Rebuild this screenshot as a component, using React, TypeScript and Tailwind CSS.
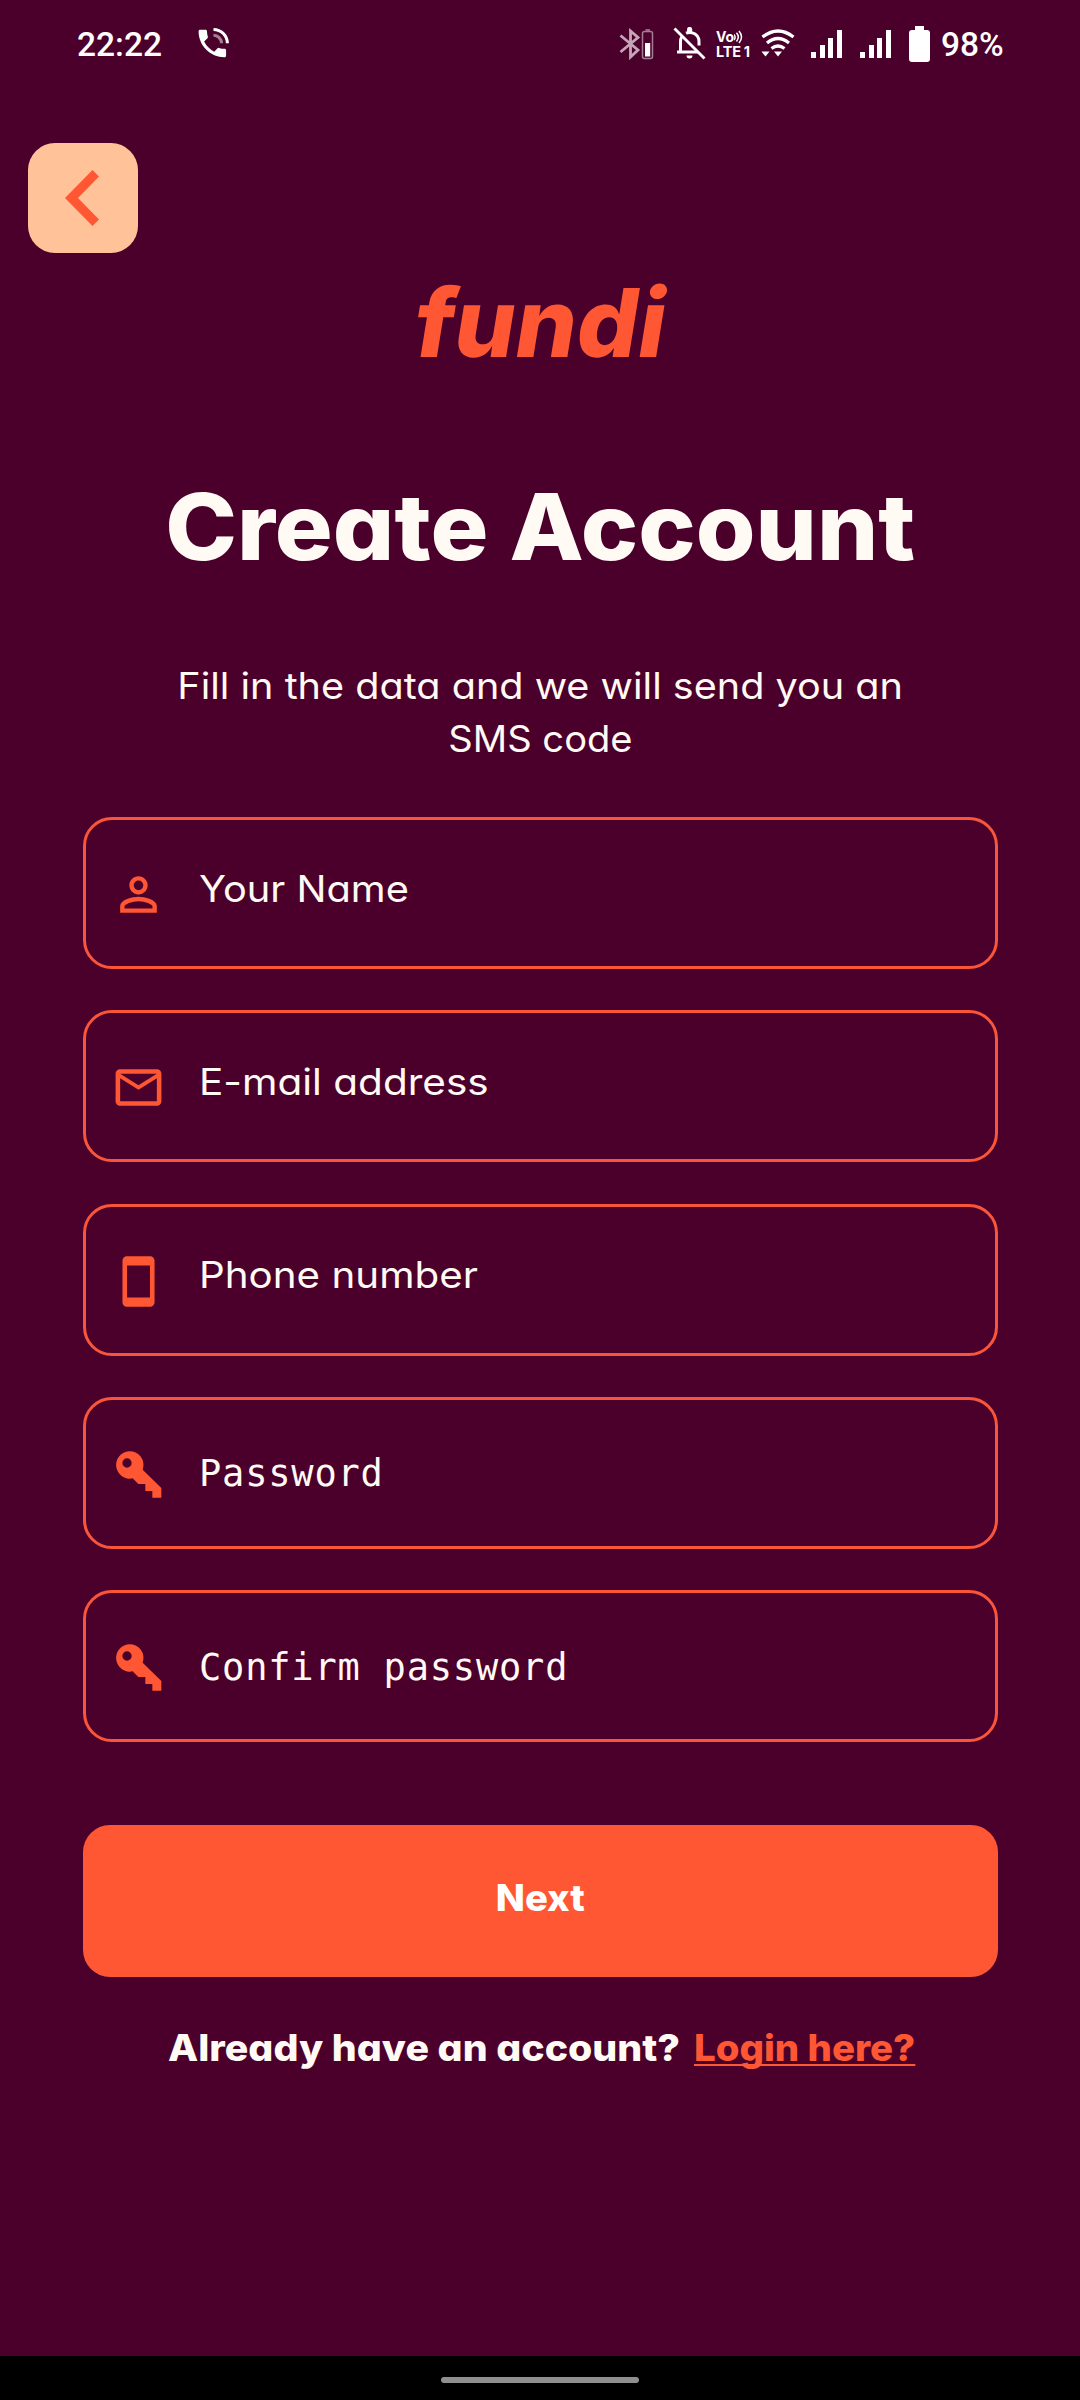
import type { ReactNode } from "react";
import { MdMailOutline, MdPersonOutline, MdStayCurrentPortrait } from "react-icons/md";

function CallIcon() {
  return (
    <svg viewBox="0 0 24 24" className="size-[39px]" fill="currentColor">
      <path d="M20 15.5c-1.25 0-2.45-.2-3.57-.57a1.02 1.02 0 0 0-1.02.24l-2.2 2.2a15.05 15.05 0 0 1-6.59-6.59l2.2-2.21c.28-.26.36-.65.25-1A11.36 11.36 0 0 1 8.5 4c0-.55-.45-1-1-1H4c-.55 0-1 .45-1 1 0 9.39 7.61 17 17 17 .55 0 1-.45 1-1v-3.5c0-.55-.45-1-1-1z" transform="translate(0 1.3) scale(.94)" />
      <path d="M21.5 12.5h-1.9a7.6 7.6 0 0 0-7.6-7.6V3a9.5 9.5 0 0 1 9.5 9.5z" />
      <path opacity=".5" d="M17.9 12.5H16a4 4 0 0 0-4-4V6.6a5.9 5.9 0 0 1 5.9 5.9z" />
    </svg>
  );
}

function BluetoothIcon() {
  return (
    <svg viewBox="0 0 36 32" className="h-8 w-9" fill="none">
      <path d="M1.5 7.5l17.5 14.500-7.500 7V3L19 9.500 1.500 24" stroke="#c3a5b7" strokeWidth="2.8" />
      <rect x="23.5" y="3.5" width="10" height="27" rx="2" stroke="#a47c93" strokeWidth="1.5" />
      <path d="M26.5 1.2h4.500v1.600h-4.500z" fill="#a47c93" />
      <path d="M26 15h5.200v13.500H26z" fill="#fff" />
    </svg>
  );
}

function MutedBellIcon() {
  return (
    <svg viewBox="0 0 33 33" className="size-[33px]" fill="none" stroke="#fff">
      <path d="M7.5 25V14.5c0-1.800.5-3.400 1.300-4.700M13 6.200c5.800-2.400 13 1.300 13 8.300v4" strokeWidth="3" />
      <path d="M4 25h21" strokeWidth="3" />
      <path d="M14 2.500a2.600 2.600 0 0 1 5.200 0V5H14z" fill="#fff" stroke="none" />
      <path d="M13.500 28.500h6a3 3 0 0 1-6 0z" fill="#fff" stroke="none" />
      <path d="M1.500 1.500l30 30" strokeWidth="2.8" />
    </svg>
  );
}

function VolteIcon() {
  return (
    <div className="flex w-[36px] flex-col font-[Inter] font-bold text-white">
      <div className="flex h-[14px] items-center">
        <span className="text-[14px] leading-[14px] tracking-[-0.2px]">Vo</span>
        <svg viewBox="0 0 9 14" className="h-[14px] w-[9px]" fill="none" stroke="#fff" strokeWidth="1.5">
          <path d="M0 4.500q2.200 2.800 0 5.600M2.500 2.800q3.600 4.200 0 8.700M5 1q5 6 0 12" />
        </svg>
      </div>
      <div className="mt-px flex gap-[3px] text-[14.5px] leading-[14px] tracking-[-0.2px]">
        <span>LTE</span>
        <span>1</span>
      </div>
    </div>
  );
}

function WifiIcon() {
  return (
    <svg viewBox="0 0 34 30" className="h-[30px] w-[34px]" fill="none" stroke="#fff" strokeWidth="3.2">
      <path d="M1.500 8q15.500-12 31 0M6 14q11-9 22 0M10.500 19.500q6.500-5 13 0" />
      <path d="M.5 22.500h8l-4 5zM13 22.500h8l-4 5z" fill="#fff" stroke="none" />
    </svg>
  );
}

function SignalIcon() {
  return (
    <div className="flex h-[28px] w-[31px] items-end justify-between">
      <div className="h-[6px] w-[5px] bg-white" />
      <div className="h-[13px] w-[5px] bg-white" />
      <div className="h-[20px] w-[5px] bg-white" />
      <div className="h-[28px] w-[5px] bg-white" />
    </div>
  );
}

function BatteryIcon() {
  return (
    <div className="flex w-[21px] flex-col items-center">
      <div className="h-[4px] w-[9px] bg-white" />
      <div className="h-[32px] w-full rounded-[3px] bg-white" />
    </div>
  );
}

function KeyIcon() {
  return (
    <svg viewBox="0 0 165 165" className="size-[55px]" fill="currentColor">
      <path
        fillRule="evenodd"
        d="M54 13a41 41 0 0 1 41 55l56 55v29h-27v-20h-21v-21H82L65 94A41 41 0 1 1 54 13zM48 34a14 14 0 1 0 0 28 14 14 0 0 0 0-28z"
      />
    </svg>
  );
}

function StatusBar() {
  return (
    <header className="flex h-[86px] items-start font-[Roboto] text-[33.5px] leading-[40px] font-medium text-white">
      <span className="mt-[25px] ml-[77px] w-[117px]">22:22</span>
      <div className="mt-[23px] w-[425px]">
        <CallIcon />
      </div>
      <div className="mt-[28px]">
        <BluetoothIcon />
      </div>
      <div className="mt-[27px] ml-[18px]">
        <MutedBellIcon />
      </div>
      <div className="mt-[30px] ml-[10px]">
        <VolteIcon />
      </div>
      <div className="mt-[29px] ml-[9px]">
        <WifiIcon />
      </div>
      <div className="mt-[29.5px] ml-[16px] flex gap-[18px]">
        <SignalIcon />
        <SignalIcon />
      </div>
      <div className="mt-[26px] ml-[18px]">
        <BatteryIcon />
      </div>
      <span className="mt-[25px] ml-[11px]">98%</span>
    </header>
  );
}

function Field({ icon, children }: { icon: ReactNode; children: ReactNode }) {
  return (
    <div className="flex h-[152px] items-start rounded-[29px] border-[3px] border-[#f9553a] pl-[25px] text-[37px] leading-[46px]">
      <div className="mt-[47px] w-[88px] text-[55px] text-[#ff5733]">{icon}</div>
      {children}
    </div>
  );
}

export default function App() {
  return (
    <div className="flex h-[2400px] w-[1080px] flex-col bg-[#4b002b] font-[Inter,sans-serif] text-[#fffaf4] [font-feature-settings:'cv11']">
      <StatusBar />
      <button className="mt-[57px] ml-[28px] flex size-[110px] items-center justify-center rounded-[27px] bg-[#ffc299] text-[#ff5733]">
        <svg viewBox="0 0 34 56" className="mr-[2px] h-[56px] w-[34px]" fill="currentColor">
          <path d="M27.5 0L34 6.500 13 28l21 21.500-6.500 6.500L0 28z" />
        </svg>
      </button>

      <div className="mt-[10px] flex h-[120px] items-center justify-center pl-[4px] text-[95px] leading-[120px] font-extrabold text-[#ff5733]">
        <span className="scale-x-[1.015] -skew-x-9">fundi</span>
      </div>
      <h1 className="mt-[84px] text-center text-[92px] leading-[120px] font-extrabold">
        <span className="inline-block scale-x-[1.05]">Create Account</span>
      </h1>
      <p className="mt-[72px] pl-px text-center text-[37px] leading-[53px]">
        <span className="inline-block scale-x-[1.07]">Fill in the data and we will send you an</span>
        <br />
        <span className="inline-block scale-x-[1.03]">SMS code</span>
      </p>

      <form className="mt-[52px] mr-[82px] ml-[83px] flex flex-col gap-[41.25px]">
        <Field icon={<MdPersonOutline />}>
          <span className="mt-[46px] origin-left scale-x-[1.075]">Your Name</span>
        </Field>
        <Field icon={<MdMailOutline />}>
          <span className="mt-[46px] origin-left scale-x-[1.095]">E-mail address</span>
        </Field>
        <Field icon={<MdStayCurrentPortrait />}>
          <span className="mt-[45px] origin-left scale-x-[1.09]">Phone number</span>
        </Field>
        <Field icon={<KeyIcon />}>
          <span className="mt-[51px] font-['DejaVu_Sans_Mono'] tracking-[0.8px]">Password</span>
        </Field>
        <Field icon={<KeyIcon />}>
          <span className="mt-[52px] font-['DejaVu_Sans_Mono'] tracking-[0.8px]">Confirm password</span>
        </Field>
      </form>

      <button className="mt-[83px] mr-[82px] ml-[83px] h-[152px] rounded-[27px] bg-[#ff5733] pb-[7px] text-[37px] font-extrabold text-white">
        <span className="inline-block scale-x-[1.03]">Next</span>
      </button>
      <div className="mt-[47px] flex pl-[168px] text-[37px] leading-[48px] font-extrabold whitespace-nowrap">
        <div className="w-[526px]">
          <span className="inline-block origin-left scale-x-[1.062]">Already have an account?</span>
        </div>
        <a className="origin-left scale-x-[1.037] text-[#ff5733] underline decoration-2 underline-offset-[3px] [text-decoration-skip-ink:none]">
          Login here?
        </a>
      </div>
      <footer className="mt-auto flex h-[44px] items-start justify-center bg-black pt-[21px]">
        <div className="h-[6px] w-[198px] rounded-full bg-[#8f8f8f]" />
      </footer>
    </div>
  );
}
